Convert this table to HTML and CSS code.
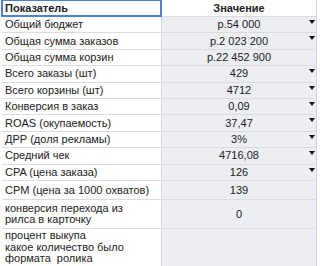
FILE: index.html
```html
<!DOCTYPE html>
<html>
<head>
<meta charset="utf-8">
<link rel="stylesheet" href="styles.css">
</head>
<body>
<div class="sheet">
  <div class="row head">
    <div class="cell name sel">Показатель</div>
    <div class="cell val">Значение</div>
  </div>
  <div class="row"><div class="cell name">Общий бюджет</div><div class="cell val dd">р.54 000</div></div>
  <div class="row"><div class="cell name">Общая сумма заказов</div><div class="cell val dd">р.2 023 200</div></div>
  <div class="row"><div class="cell name">Общая сумма корзин</div><div class="cell val">р.22 452 900</div></div>
  <div class="row"><div class="cell name">Всего заказы (шт)</div><div class="cell val dd">429</div></div>
  <div class="row"><div class="cell name">Всего корзины (шт)</div><div class="cell val dd">4712</div></div>
  <div class="row"><div class="cell name">Конверсия в заказ</div><div class="cell val dd">0,09</div></div>
  <div class="row"><div class="cell name">ROAS (окупаемость)</div><div class="cell val dd">37,47</div></div>
  <div class="row"><div class="cell name">ДРР (доля рекламы)</div><div class="cell val dd">3%</div></div>
  <div class="row"><div class="cell name">Средний чек</div><div class="cell val dd">4716,08</div></div>
  <div class="row"><div class="cell name">CPA (цена заказа)</div><div class="cell val dd">126</div></div>
  <div class="row cpm"><div class="cell name">CPM (цена за 1000 охватов)</div><div class="cell val">139</div></div>
  <div class="row two"><div class="cell name">конверсия перехода из<br>рилса в карточку</div><div class="cell val">0</div></div>
  <div class="row three"><div class="cell name">процент выкупа<br>какое количество было<br>формата&nbsp; ролика</div><div class="cell val"></div></div>
</div>
</body>
</html>
```

FILE: styles.css
```css
html, body {
  margin: 0;
  padding: 0;
  background: #ffffff;
}
body {
  font-family: "Liberation Sans", Arial, sans-serif;
  font-size: 11px;
  color: #222222;
  overflow: hidden;
}
.sheet {
  margin-left: 2px;
  width: 314px;
  border-right: 1px solid #d4d6db;
}
.row {
  display: grid;
  grid-template-columns: 159px 1fr;
  height: 16.4px;
  border-bottom: 1px solid #dcdcdc;
  box-sizing: border-box;
}
.row.head {
  height: 17px;
}
.row.cpm { height: 19.5px; }
.row.two { height: 29px; }
.row.three { height: 45px; border-bottom: none; }
.cell {
  display: flex;
  align-items: center;
  line-height: 13px;
  white-space: nowrap;
  position: relative;
}
.two .name, .three .name {
  line-height: 11.5px;
}
.name {
  padding-left: 3px;
  background: #ffffff;
}
.val {
  justify-content: center;
  background: #eceef3;
  border-left: 1px solid #d4d6db;
}
.head .val {
  background: #ffffff;
  font-weight: bold;
}
.head .name {
  font-weight: bold;
}
.sel {
  outline: 2px solid #4a80d8;
  outline-offset: -1px;
  z-index: 1;
}
.three .name {
  align-items: flex-start;
  padding-top: 1px;
}
.dd::after {
  content: "";
  position: absolute;
  right: 1px;
  top: 3px;
  width: 0;
  height: 0;
  border-left: 3px solid transparent;
  border-right: 3px solid transparent;
  border-top: 4px solid #111111;
}
```
